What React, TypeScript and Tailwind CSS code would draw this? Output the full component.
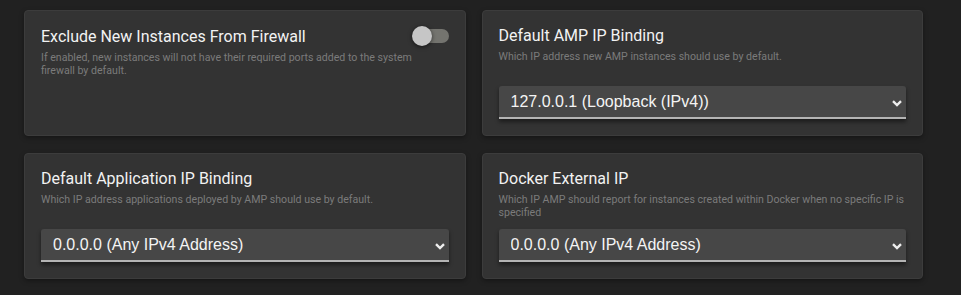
import React, { useState } from "react";

type Setting = {
  title: string;
  description: string;
  kind: "toggle" | "select";
  options?: string[];
};

const SETTINGS: Setting[] = [
  {
    title: "Exclude New Instances From Firewall",
    description:
      "If enabled, new instances will not have their required ports added to the system firewall by default.",
    kind: "toggle",
  },
  {
    title: "Default AMP IP Binding",
    description: "Which IP address new AMP instances should use by default.",
    kind: "select",
    options: ["127.0.0.1 (Loopback (IPv4))", "0.0.0.0 (Any IPv4 Address)"],
  },
  {
    title: "Default Application IP Binding",
    description: "Which IP address applications deployed by AMP should use by default.",
    kind: "select",
    options: ["0.0.0.0 (Any IPv4 Address)", "127.0.0.1 (Loopback (IPv4))"],
  },
  {
    title: "Docker External IP",
    description:
      "Which IP AMP should report for instances created within Docker when no specific IP is specified",
    kind: "select",
    options: ["0.0.0.0 (Any IPv4 Address)", "127.0.0.1 (Loopback (IPv4))"],
  },
];

const Toggle: React.FC = () => {
  const [on, setOn] = useState(false);
  return (
    <button
      onClick={() => setOn(!on)}
      className="relative flex items-center w-[37px] h-[20px] shrink-0"
      title="Toggle"
    >
      <span className="ml-[2px] w-[35px] h-[14px] rounded-full bg-[#74746f]" />
      <span
        className={
          on
            ? "absolute top-0 right-0 w-[20px] h-[20px] rounded-full bg-[#d0d0d0] shadow-[0_1px_4px_rgba(0,0,0,0.6)]"
            : "absolute top-0 left-0 w-[20px] h-[20px] rounded-full bg-[#c6c6c6] shadow-[0_1px_4px_rgba(0,0,0,0.6)]"
        }
      />
    </button>
  );
};

const Select: React.FC<{ options: string[] }> = ({ options }) => (
  <div className="relative shadow-[0_3px_4px_rgba(0,0,0,0.45)]">
    <select
      defaultValue={options[0]}
      className="appearance-none w-full h-[33px] pl-[12px] pr-8 bg-[#474747] text-[#f4f4f4] text-[16px] rounded-t-[3px] border-b-2 border-[#b4b4b4] outline-none"
      style={{ fontFamily: '"Liberation Sans", Arial, sans-serif' }}
    >
      {options.map((o) => (
        <option key={o}>{o}</option>
      ))}
    </select>
    <svg
      className="absolute right-[4px] top-[14px] pointer-events-none"
      width="10"
      height="7"
      viewBox="0 0 10 7"
    >
      <path d="M1 1.2 L5 5 L9 1.2" stroke="#eeeeee" strokeWidth="2.4" fill="none" />
    </svg>
  </div>
);

const SettingCard: React.FC<{ setting: Setting }> = ({ setting }) => (
  <div className="h-[126px] flex flex-col px-[16px] pt-[15px] pb-[16px] bg-[#333333] border border-[#3c3c3c] rounded-[4px] shadow-[0_2px_5px_rgba(0,0,0,0.35)]">
    <div className="flex items-center justify-between">
      <h3 className="text-[16px] leading-[19px] text-[#f2f2f2]">{setting.title}</h3>
      {setting.kind === "toggle" && <Toggle />}
    </div>
    <p
      className={
        setting.kind === "toggle"
          ? "mt-[5px] pr-[30px] text-[10.6px] leading-[13px] text-[#7b7b7b]"
          : "mt-[5px] text-[10.6px] leading-[13px] text-[#7b7b7b]"
      }
    >
      {setting.description}
    </p>
    {setting.kind === "select" && setting.options && (
      <div className="mt-auto">
        <Select options={setting.options} />
      </div>
    )}
  </div>
);

export default function App() {
  return (
    <div
      className="w-[961px] h-[295px] bg-[#212121] pl-[24px] pt-[10px] pr-[38px]"
      style={{ fontFamily: 'Roboto, "Liberation Sans", sans-serif' }}
    >
      <div className="grid grid-cols-2 gap-x-[16px] gap-y-[17px]">
        {SETTINGS.map((s) => (
          <SettingCard key={s.title} setting={s} />
        ))}
      </div>
    </div>
  );
}
